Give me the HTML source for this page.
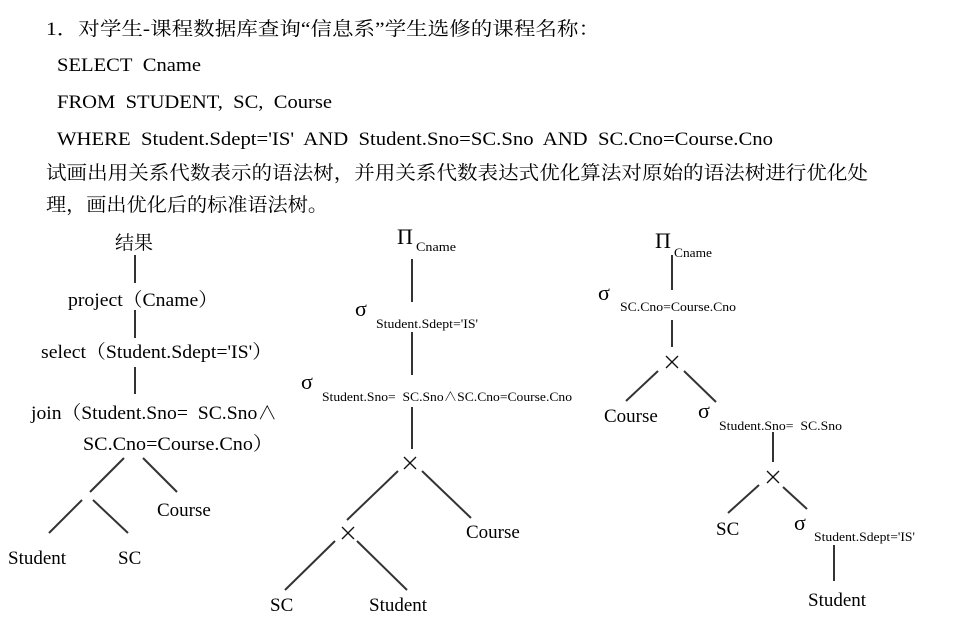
<!DOCTYPE html>
<html><head><meta charset="utf-8"><style>
html,body{margin:0;padding:0;background:#fff;width:960px;height:635px;overflow:hidden}
svg{display:block}
text{font-family:"Liberation Serif","Noto Serif CJK SC",serif;fill:#000}
.b{font-size:19px}
.s{font-size:13px}
.g{font-size:22px}
line{stroke:#333;stroke-width:2}
.x line{stroke:#111;stroke-width:1.3}
</style></head><body>
<svg width="960" height="635" viewBox="0 0 960 635">
<text class="b" x="46" y="35" textLength="554" lengthAdjust="spacingAndGlyphs">1．对学生-课程数据库查询“信息系”学生选修的课程名称：</text>
<text class="b" x="57" y="71" textLength="144" lengthAdjust="spacingAndGlyphs">SELECT&#160; Cname</text>
<text class="b" x="57" y="108" textLength="275" lengthAdjust="spacingAndGlyphs">FROM&#160; STUDENT,&#160; SC,&#160; Course</text>
<text class="b" x="57" y="145" textLength="716" lengthAdjust="spacingAndGlyphs">WHERE&#160; Student.Sdept='IS'&#160; AND&#160; Student.Sno=SC.Sno&#160; AND&#160; SC.Cno=Course.Cno</text>
<text class="b" x="46" y="179" textLength="822" lengthAdjust="spacingAndGlyphs">试画出用关系代数表示的语法树，并用关系代数表达式优化算法对原始的语法树进行优化处</text>
<text class="b" x="46" y="211" textLength="282" lengthAdjust="spacingAndGlyphs">理，画出优化后的标准语法树。</text>

<!-- left tree -->
<text class="b" x="115" y="249">结果</text>
<line x1="135" y1="255" x2="135" y2="283"/>
<text class="b" x="68" y="306" textLength="150" lengthAdjust="spacingAndGlyphs">project（Cname）</text>
<line x1="135" y1="310" x2="135" y2="338"/>
<text class="b" x="41" y="358" textLength="231" lengthAdjust="spacingAndGlyphs">select（Student.Sdept='IS'）</text>
<line x1="135" y1="367" x2="135" y2="394"/>
<text class="b" x="31" y="419" textLength="246" lengthAdjust="spacingAndGlyphs">join（Student.Sno=&#160; SC.Sno∧</text>
<text class="b" x="83" y="450" textLength="190" lengthAdjust="spacingAndGlyphs">SC.Cno=Course.Cno）</text>
<line x1="124" y1="458" x2="90" y2="492"/>
<line x1="143" y1="458" x2="177" y2="492"/>
<line x1="82" y1="500" x2="49" y2="533"/>
<line x1="93" y1="500" x2="128" y2="533"/>
<text class="b" x="157" y="516">Course</text>
<text class="b" x="8" y="564">Student</text>
<text class="b" x="118" y="564">SC</text>

<!-- middle tree -->
<text class="g" x="397" y="244">Π</text>
<text class="s" x="416" y="251" textLength="40" lengthAdjust="spacingAndGlyphs">Cname</text>
<line x1="412" y1="259" x2="412" y2="302"/>
<text class="g" x="355" y="316">σ</text>
<text class="s" x="376" y="328" textLength="102" lengthAdjust="spacingAndGlyphs">Student.Sdept='IS'</text>
<line x1="412" y1="332" x2="412" y2="375"/>
<text class="g" x="301" y="389">σ</text>
<text class="s" x="322" y="401" textLength="250" lengthAdjust="spacingAndGlyphs">Student.Sno=&#160; SC.Sno∧SC.Cno=Course.Cno</text>
<line x1="412" y1="407" x2="412" y2="449"/>
<g class="x"><line x1="404" y1="457" x2="416" y2="469"/><line x1="416" y1="457" x2="404" y2="469"/></g>
<line x1="398" y1="471" x2="347" y2="520"/>
<line x1="422" y1="471" x2="471" y2="518"/>
<g class="x"><line x1="342" y1="527" x2="354" y2="539"/><line x1="354" y1="527" x2="342" y2="539"/></g>
<line x1="335" y1="541" x2="285" y2="590"/>
<line x1="357" y1="541" x2="407" y2="590"/>
<text class="b" x="466" y="538">Course</text>
<text class="b" x="270" y="611">SC</text>
<text class="b" x="369" y="611">Student</text>

<!-- right tree -->
<text class="g" x="655" y="248">Π</text>
<text class="s" x="674" y="257" textLength="38" lengthAdjust="spacingAndGlyphs">Cname</text>
<line x1="672" y1="255" x2="672" y2="290"/>
<text class="g" x="598" y="300">σ</text>
<text class="s" x="620" y="311" textLength="116" lengthAdjust="spacingAndGlyphs">SC.Cno=Course.Cno</text>
<line x1="672" y1="320" x2="672" y2="347"/>
<g class="x"><line x1="666" y1="356" x2="678" y2="368"/><line x1="678" y1="356" x2="666" y2="368"/></g>
<line x1="658" y1="371" x2="626" y2="401"/>
<line x1="684" y1="371" x2="716" y2="402"/>
<text class="b" x="604" y="422">Course</text>
<text class="g" x="698" y="418">σ</text>
<text class="s" x="719" y="430" textLength="123" lengthAdjust="spacingAndGlyphs">Student.Sno=&#160; SC.Sno</text>
<line x1="773" y1="432" x2="773" y2="462"/>
<g class="x"><line x1="767" y1="471" x2="779" y2="483"/><line x1="779" y1="471" x2="767" y2="483"/></g>
<line x1="759" y1="485" x2="728" y2="513"/>
<line x1="783" y1="487" x2="807" y2="509"/>
<text class="b" x="716" y="535">SC</text>
<text class="g" x="794" y="530">σ</text>
<text class="s" x="814" y="541" textLength="101" lengthAdjust="spacingAndGlyphs">Student.Sdept='IS'</text>
<line x1="834" y1="545" x2="834" y2="581"/>
<text class="b" x="808" y="606">Student</text>
</svg>
</body></html>
